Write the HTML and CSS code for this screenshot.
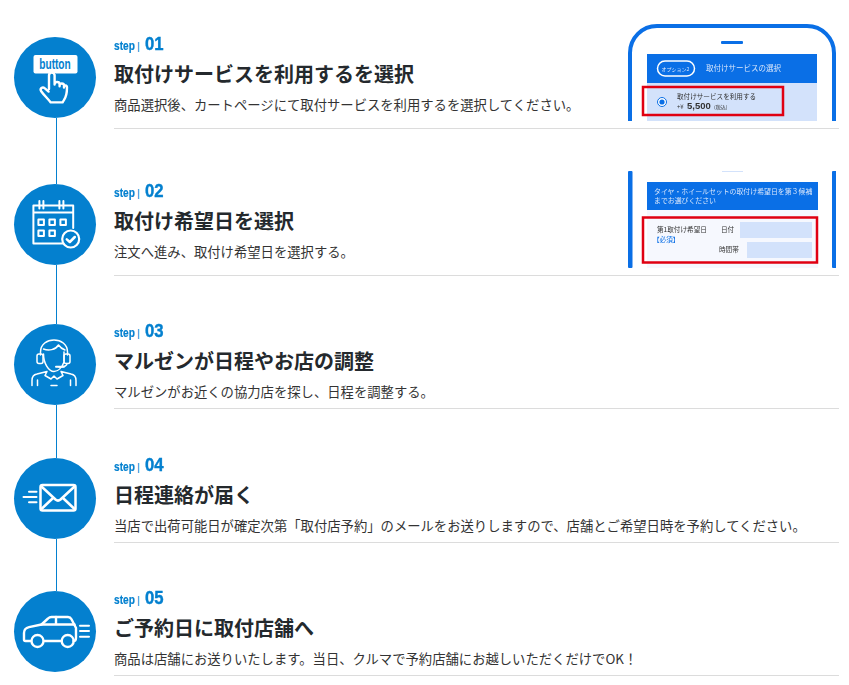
FILE: index.html
```html
<!DOCTYPE html>
<html lang="ja">
<head>
<meta charset="utf-8">
<title>取付けの流れ</title>
<link rel="stylesheet" href="styles.css">
</head>
<body>
<ol class="steps">
  <li class="step step-a">
    <div class="rail">
      <span class="line line-none"></span>
      <span class="badge">
        <svg class="icon" viewBox="0 0 82 82">
          <rect class="fill" x="19.5" y="18" width="44" height="18.5" rx="2"/>
          <text class="btn-label" x="41" y="31.5" textLength="31.500" lengthAdjust="spacingAndGlyphs">button</text>
          <path class="bluestroke" d="M38 36v12"/>
          <path class="st24" d="M35 52V38.400c0-3.800 5.600-3.800 5.600 0V47.500M40.600 47.200c0-3 5-3 5 0v2M45.600 48.600c0-2.800 4.400-2.800 4.400 0v2M50 50.400c0-2.600 3-2.400 3 .2 0 5-.6 9-3 12.400l-1.400 2.400H36.600c-2-3.200-6.200-6.600-9.400-11.200-1.800-2.600 1.400-4.800 3.400-3l4 3.400"/>
        </svg>
      </span>
      <span class="line"></span>
    </div>
    <div class="body">
      <div class="text">
        <p class="label"><span class="word">step</span><span class="bar">|</span><span class="num">01</span></p>
        <h2 class="title">取付けサービスを利用するを選択</h2>
        <p class="desc">商品選択後、カートページにて取付サービスを利用するを選択してください。</p>
      </div>
      <svg class="shot" viewBox="628 24 208 97">
        <path class="phone" d="M630 121V53c0-15 12-27 27-27h150c15 0 27 12 27 27v68"/>
        <rect class="notch" x="721" y="41" width="22" height="3" rx="1"/>
        <rect class="blue" x="647" y="54" width="170" height="29"/>
        <rect class="pale" x="647" y="83" width="170" height="38"/>
        <rect class="pill" x="657.5" y="61" width="37" height="15" rx="7.5"/>
        <text class="t5 white" x="661.500" y="70.500">オプション2</text>
        <text class="t75 white" x="706" y="71">取付けサービスの選択</text>
        <rect class="redbox" x="643" y="87" width="140" height="28"/>
        <circle class="radio" cx="662" cy="102" r="4.5"/>
        <circle class="radiodot" cx="662" cy="102" r="2.6"/>
        <text class="t66 dark" x="677" y="99">取付けサービスを利用する</text>
        <text class="t6 dark" x="677" y="109">+¥</text>
        <text class="price" x="687" y="109">5,500</text>
        <text class="t5 dark" x="714" y="109">(税込)</text>
      </svg>
    </div>
  </li>
  <li class="step step-b">
    <div class="rail">
      <span class="line"></span>
      <span class="badge">
        <svg class="icon" viewBox="0 0 82 82">
          <path class="st2" d="M53 59.4H19.4V21.5h39.8V44M19.4 28.4h39.8M25.4 17v7.5M29.4 17v7.5M45.4 17v7.5M49.4 17v7.5"/>
          <path class="st2" d="M24.4 35.4h5.5v5.5h-5.5zM35.4 35.4h5.5v5.5h-5.5zM46.4 35.4h5.5v5.5h-5.5zM24.4 46.4h5.5v5.5h-5.5zM35.4 46.4h5.5v5.5h-5.5z"/>
          <circle class="check-ring" cx="56.7" cy="55" r="8.5"/>
          <path class="st25" d="M52.8 55.4l3 2.6 5-5"/>
        </svg>
      </span>
      <span class="line"></span>
    </div>
    <div class="body">
      <div class="text">
        <p class="label"><span class="word">step</span><span class="bar">|</span><span class="num">02</span></p>
        <h2 class="title">取付け希望日を選択</h2>
        <p class="desc">注文へ進み、取付け希望日を選択する。</p>
      </div>
      <svg class="shot" viewBox="628 171 208 97">
        <rect class="blue2" x="628" y="171" width="4.5" height="97" rx="1"/>
        <rect class="blue2" x="832" y="171" width="4.5" height="97" rx="1"/>
        <rect class="notch-pale" x="722" y="171" width="21" height="1"/>
        <rect class="blue" x="647" y="182" width="171" height="28"/>
        <rect class="paler" x="647" y="210" width="171" height="58"/>
        <text class="t69 white" x="654" y="194">タイヤ・ホイールセットの取付け希望日を第３候補</text>
        <text class="t69 white" x="654" y="203">までお選びください</text>
        <rect class="redbox" x="643" y="217.5" width="174" height="45"/>
        <text class="t66 dark" x="657" y="232">第1取付け希望日</text>
        <text class="t66 link" x="653" y="242">【必須】</text>
        <text class="t66 dark" x="721" y="232">日付</text>
        <rect class="pale" x="740" y="222" width="72" height="16"/>
        <text class="t66 dark" x="719" y="252">時間帯</text>
        <rect class="pale" x="747" y="242" width="65" height="16"/>
      </svg>
    </div>
  </li>
  <li class="step step-c">
    <div class="rail">
      <span class="line"></span>
      <span class="badge">
        <svg class="icon" viewBox="0 0 82 82">
          <path class="st15" d="M26.5 31v-3c0-16 27-16 27 0v3"/>
          <path class="st15" d="M29.5 25c5 2 12 1 15-4 2 3 4 4 6.500 5M29.500 30c0 9 5 17.500 10.500 17.500 4 0 8-4 10-9.500M50 37v-9"/>
          <rect class="st15" x="23" y="30" width="6" height="9.500" rx="2"/>
          <rect class="st15" x="50" y="30" width="6" height="9.500" rx="2"/>
          <path class="st15" d="M53 39.500c0 2.500-3 3.500-8 3.500"/>
          <rect class="fillw" x="41" y="41.800" width="10" height="2" rx="1"/>
          <path class="st15" d="M18 61.500v-5c0-4 2-6 5-6.500l10-2.500M62 61.500v-5c0-4-2-6-5-6.500l-10-2.500M33 47.500l-2 4 6 3.500 3-3 3 3 6-3.500-2-4M23.500 61.500V56M56.500 61.500V56M37 61.500h6"/>
        </svg>
      </span>
      <span class="line"></span>
    </div>
    <div class="body">
      <div class="text">
        <p class="label"><span class="word">step</span><span class="bar">|</span><span class="num">03</span></p>
        <h2 class="title">マルゼンが日程やお店の調整</h2>
        <p class="desc">マルゼンがお近くの協力店を探し、日程を調整する。</p>
      </div>
    </div>
  </li>
  <li class="step step-c">
    <div class="rail">
      <span class="line"></span>
      <span class="badge">
        <svg class="icon" viewBox="0 0 82 82">
          <rect class="st25" x="26.500" y="27" width="35" height="25.500" rx="2"/>
          <path class="st25" d="M28 29l13.500 12.500c1.500 1.300 3.500 1.300 5 0L60 29M28 50.500l10.500-10M60 50.500l-10.500-10"/>
          <path class="st2" d="M15 33.700h7.500M9.500 39h13M15 44.300h7.500"/>
        </svg>
      </span>
      <span class="line"></span>
    </div>
    <div class="body">
      <div class="text">
        <p class="label"><span class="word">step</span><span class="bar">|</span><span class="num">04</span></p>
        <h2 class="title">日程連絡が届く</h2>
        <p class="desc">当店で出荷可能日が確定次第「取付店予約」のメールをお送りしますので、店舗とご希望日時を予約してください。</p>
      </div>
    </div>
  </li>
  <li class="step step-c">
    <div class="rail">
      <span class="line"></span>
      <span class="badge">
        <svg class="icon" viewBox="0 0 82 82">
          <path class="st24" d="M17 50h-5.500c-1 0-1.500-.6-1.500-1.500V42c0-3 1.500-5 5-5.800L27.500 33.500 34 27.500c1-1 2-1.500 3.500-1.500H54c1.500 0 2.800.8 3.500 2.200L62 37v10c0 2-1 3-2.500 3M30 50h17.500"/>
          <path class="st24" d="M27.500 33.500H60.500M42 26v7.500"/>
          <circle class="st24" cx="23.500" cy="50" r="6"/>
          <circle class="st24" cx="53.700" cy="50" r="6"/>
          <path class="st2" d="M66 34.700h9M66 40h9M66 45.700h9"/>
        </svg>
      </span>
    </div>
    <div class="body">
      <div class="text">
        <p class="label"><span class="word">step</span><span class="bar">|</span><span class="num">05</span></p>
        <h2 class="title">ご予約日に取付店舗へ</h2>
        <p class="desc">商品は店舗にお送りいたします。当日、クルマで予約店舗にお越しいただくだけでOK！</p>
      </div>
    </div>
  </li>
</ol>
</body>
</html>
```

FILE: styles.css
```css
html, body {
  margin: 0;
  padding: 0;
  background: #fff;
}
body {
  font-family: "Noto Sans CJK JP", "Noto Sans", sans-serif;
  color: #2b2f33;
  overflow: hidden;
}
.steps {
  list-style: none;
  margin: 0;
  padding: 24px 10px 0 14px;
}
.step {
  display: flex;
}
.rail {
  flex: 0 0 82px;
  display: flex;
  flex-direction: column;
  align-items: center;
}
.line {
  display: block;
  flex: 1 1 0;
  width: 1px;
  margin-left: 3px;
  background: #0480cf;
}
.line-none {
  background: transparent;
}
.step-a .line:first-child,
.step-b .line:first-child {
  flex: 0 0 13px;
}
.step-c .line:first-child {
  flex: 0 0 6.200px;
}
.badge {
  display: block;
  flex: 0 0 81px;
  width: 82px;
  height: 81px;
  border-radius: 50%;
  background: #0480cf;
}
.icon {
  display: block;
  width: 82px;
  height: 82px;
}
.body {
  flex: 1 1 auto;
  margin-left: 18px;
  margin-bottom: 42px;
  padding: 3.400px 3px 6px 0;
  display: flex;
  justify-content: space-between;
  align-items: flex-end;
  border-bottom: 1px solid #dcdcdc;
}
.step-a .body,
.step-b .body {
  padding-top: 0;
}
.step-a .text,
.step-b .text {
  margin-bottom: 7px;
}
.text {
  min-width: 0;
}
.label {
  margin: 0;
  display: flex;
  align-items: baseline;
  height: 20px;
  line-height: 19px;
  color: #0480cf;
  font-family: "Liberation Sans", sans-serif;
  font-weight: 700;
}
.word {
  display: inline-block;
  width: 21px;
  font-size: 13px;
  transform: scaleX(0.78);
  transform-origin: 0 50%;
  -webkit-text-stroke: 0.2px #0480cf;
}
.bar {
  font-size: 11px;
  font-weight: 400;
  margin: 0 5px 0 2px;
}
.num {
  display: inline-block;
  width: 19px;
  font-size: 19px;
  transform: scaleX(0.88);
  transform-origin: 0 50%;
  -webkit-text-stroke: 0.4px #0480cf;
}
.title {
  margin: 5px 0 0;
  font-size: 20px;
  line-height: 30px;
  font-weight: 700;
  color: #24292d;
}
.desc {
  margin: 6px 0 0;
  font-size: 13.330px;
  line-height: 20px;
  color: #333;
}
.shot {
  display: block;
  flex: 0 0 208px;
  width: 208px;
  height: 97px;
  margin-bottom: 1px;
  filter: blur(0.45px);
}
.phone {
  fill: #fff;
  stroke: #0a6fe6;
  stroke-width: 4;
}
.notch { fill: #0a6fe6; }
.notch-pale { fill: #d3e2fb; }
.blue { fill: #0a6fe6; }
.blue2 { fill: #0a6fe6; }
.pale { fill: #d3e2fb; }
.paler { fill: #f6f8fe; }
.pill {
  fill: none;
  stroke: #fff;
  stroke-width: 1.500;
}
.redbox {
  fill: none;
  stroke: #e00012;
  stroke-width: 2.500;
}
.radio {
  fill: #fff;
  stroke: #0a6fe6;
  stroke-width: 1;
}
.radiodot { fill: #0a6fe6; }
.t5 { font-size: 5px; }
.t6 { font-size: 6px; }
.t66 { font-size: 6.600px; }
.t69 { font-size: 6.900px; }
.t75 { font-size: 7.500px; }
.white { fill: #d8e6fb; }
.dark { fill: #333; }
.link { fill: #0a6fe6; }
.price {
  font-family: "Liberation Sans", sans-serif;
  font-size: 9.500px;
  font-weight: 700;
  fill: #333;
}
.fill { fill: #fff; }
.fillw { fill: #fff; }
.btn-label {
  font-family: "Liberation Sans", sans-serif;
  font-size: 14px;
  font-weight: 700;
  fill: #0480cf;
  text-anchor: middle;
}
.bluestroke {
  fill: none;
  stroke: #0480cf;
  stroke-width: 8;
}
.st15, .st2, .st24, .st25 {
  fill: none;
  stroke: #fff;
  stroke-linecap: round;
  stroke-linejoin: round;
}
.st15 { stroke-width: 1.500; }
.st2 { stroke-width: 2; }
.st24 { stroke-width: 2.400; }
.st25 { stroke-width: 2.500; }
.check-ring {
  fill: #0480cf;
  stroke: #fff;
  stroke-width: 2.200;
}
```
